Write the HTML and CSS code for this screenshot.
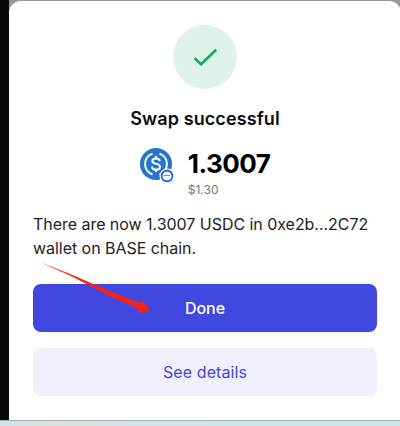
FILE: index.html
```html
<!DOCTYPE html>
<html lang="en">
<head>
<meta charset="utf-8">
<title>Swap successful</title>
<link rel="stylesheet" href="styles.css">
</head>
<body>
<div class="screen">
  <main class="card">
    <div class="status">
      <svg width="64" height="64" viewBox="0 0 64 64" fill="none"><path d="M21.6 33.2l6.5 6L43.2 24.8" stroke="#12ab62" stroke-width="2.6"/></svg>
    </div>
    <h1 class="title">Swap successful</h1>
    <div class="token">
      <svg class="coin" width="34" height="36" viewBox="0 0 34 36" fill="none">
        <circle cx="16" cy="16" r="16" fill="#2775ca"/>
        <g stroke="#fff" stroke-width="2">
          <path d="M12.5 5.6a11 11 0 0 0 0 20.8M19.5 5.6a11 11 0 0 1 0 20.8"/>
          <path d="M19.8 13.2c-.2-1.8-1.5-2.8-3.7-2.8-2.3 0-3.8 1-3.8 2.7 0 3.9 7.7 1.6 7.7 5.6 0 1.8-1.6 2.9-3.9 2.9-2.5 0-4-1.1-4.1-3M16 8v2.5M16 21.5V24"/>
        </g>
        <circle cx="27" cy="28" r="7.5" fill="#fff"/>
        <circle cx="27" cy="28" r="5.4" stroke="#0c50ff" stroke-width="1.6"/>
        <path d="M23.5 27.5h6.5" stroke="#5d88ff"/>
      </svg>
      <div class="amounts">
        <div class="amount">1.3007</div>
        <div class="fiat">$1.30</div>
      </div>
    </div>
    <p class="message">There are now 1.3007 USDC in 0xe2b...2C72 wallet on BASE chain.</p>
    <div class="actions">
      <button class="button primary">Done</button>
      <button class="button secondary">See details</button>
    </div>
  </main>
  <footer class="desktop"></footer>
  <svg class="arrow" width="112" height="53" viewBox="0 0 112 53"><path d="M1 1.2L33 13.8 71 30.3 102 42.3 103.3 38.8 111.3 50 97.5 52 100.3 48 71 35.2 33 15.6Z" fill="#ff2012"/></svg>
</div>
</body>
</html>
```
FILE: styles.css
```css
* { box-sizing: border-box; }
body { margin: 0; font-family: Inter, sans-serif; }
.screen {
  position: relative;
  width: 400px;
  height: 426px;
  overflow: hidden;
  padding: 1px 0 0 9px;
  background: linear-gradient(90deg, #060709 9px, #999 9px);
}
.card {
  width: 392px;
  height: 419px;
  padding: 24px;
  background: #fff;
  border-radius: 12px 12px 0 0;
}
.status {
  width: 64px;
  height: 64px;
  margin: 0 auto;
  border-radius: 50%;
  background: #dff3ea;
}
.status svg { display: block; }
.title {
  margin: 16px 0 0;
  font-size: 18px;
  line-height: 28px;
  font-weight: 600;
  letter-spacing: 0.1px;
  text-align: center;
  color: #0b0d10;
}
.token {
  display: flex;
  justify-content: center;
  gap: 14px;
  margin-top: 15px;
}
.coin { flex: none; }
.amount {
  font-size: 26px;
  line-height: 32px;
  font-weight: 700;
  letter-spacing: -0.55px;
  color: #000;
}
.fiat {
  margin-top: 2px;
  font-size: 12px;
  line-height: 16px;
  color: #777;
}
.message {
  margin: 14px 0 0;
  font-size: 16px;
  line-height: 24px;
  letter-spacing: -0.04px;
  color: #222;
}
.actions {
  display: grid;
  gap: 16px;
  margin-top: 24px;
}
.button {
  height: 48px;
  padding: 0;
  border: 0;
  border-radius: 8px;
  font: 400 16px/24px Inter, sans-serif;
}
.primary { background: #4048e0; color: #fff; font-weight: 500; }
.secondary { background: #f0f0fc; color: #4048e0; letter-spacing: 0.1px; }
.desktop {
  height: 6px;
  margin-left: -9px;
  border-top: 1px solid #a9b1b5;
  background: linear-gradient(90deg, #cfe2ea, #dbe2df 16%, #cfe4ed 35%, #cde3eb);
}
.arrow { position: absolute; left: 39px; top: 261px; }
```
